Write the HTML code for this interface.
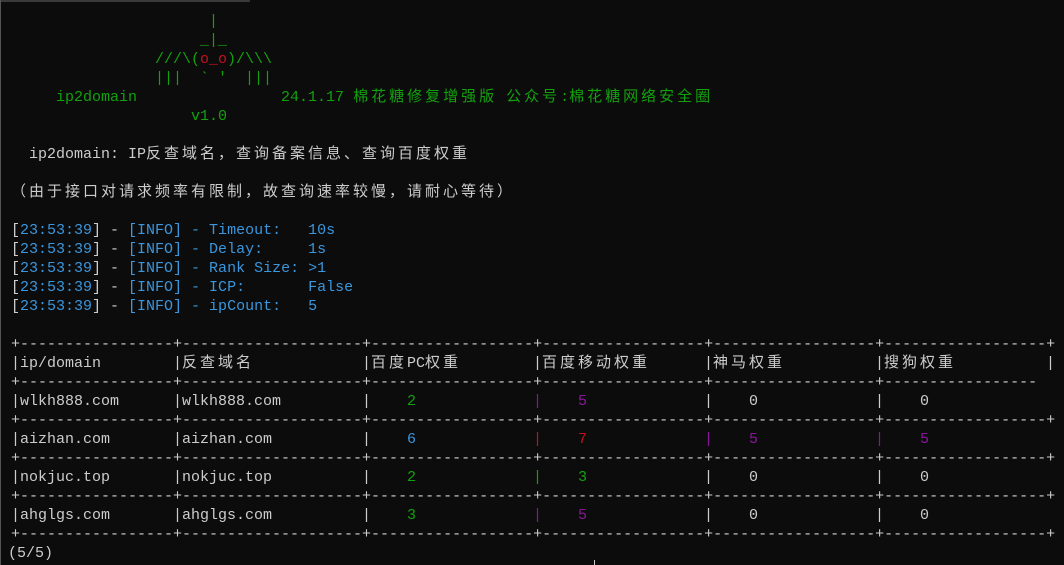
<!DOCTYPE html>
<html><head><meta charset="utf-8"><style>
html,body{margin:0;padding:0}
body{width:1064px;height:565px;background:#0c0c0c;overflow:hidden;position:relative;font-family:"Liberation Mono","Noto Sans CJK SC",monospace;font-size:15px;color:#cccccc}
.l{position:absolute;height:19px;line-height:19px;white-space:pre}
.c{letter-spacing:3px}
.g{color:#13a10e}.r{color:#c50f1f}.b{color:#3a96dd}.p{color:#881798}.w{color:#cccccc}
.s{position:absolute;top:0;white-space:pre}
</style></head><body>
<div style="position:absolute;left:0;top:0;width:250px;height:2px;background:#3a3a3a"></div>
<div style="position:absolute;left:0;top:0;width:1px;height:565px;background:#555"></div>

<div class="l g" style="top:12px;left:11px">                      |</div>
<div class="l g" style="top:31px;left:11px">                     _|_</div>
<div class="l g" style="top:50px;left:11px">                ///\(<span class="r">o_o</span>)/\\\</div>
<div class="l g" style="top:69px;left:11px">                |||  ` '  |||</div>
<div class="l g" style="top:88px;left:11px">     ip2domain                24.1.17 <span class="c">棉花糖修复增强版</span> <span class="c">公众号</span>:<span class="c">棉花糖网络安全圈</span></div>
<div class="l g" style="top:107px;left:11px">                    v1.0</div>
<div class="l" style="top:145px;left:11px">  ip2domain: IP<span class="c">反查域名，查询备案信息、查询百度权重</span></div>
<div class="l" style="top:183px;left:11px"><span class="c">（由于接口对请求频率有限制，故查询速率较慢，请耐心等待）</span></div>

<div class="l b" style="top:221px;left:11px"><span class="w">[</span>23:53:39<span class="w">] - </span>[INFO] - Timeout:   10s</div>
<div class="l b" style="top:240px;left:11px"><span class="w">[</span>23:53:39<span class="w">] - </span>[INFO] - Delay:     1s</div>
<div class="l b" style="top:259px;left:11px"><span class="w">[</span>23:53:39<span class="w">] - </span>[INFO] - Rank Size: &gt;1</div>
<div class="l b" style="top:278px;left:11px"><span class="w">[</span>23:53:39<span class="w">] - </span>[INFO] - ICP:       False</div>
<div class="l b" style="top:297px;left:11px"><span class="w">[</span>23:53:39<span class="w">] - </span>[INFO] - ipCount:   5</div>

<div class="l" style="top:335px;left:11px">+-----------------+--------------------+------------------+------------------+------------------+------------------+</div>
<div class="l" style="top:354px;left:0;width:1064px"><span class="s" style="left:11px">|ip/domain</span><span class="s" style="left:173px">|<span class="c">反查域名</span></span><span class="s" style="left:362px">|<span class="c">百度</span>PC<span class="c">权重</span></span><span class="s" style="left:533px">|<span class="c">百度移动权重</span></span><span class="s" style="left:704px">|<span class="c">神马权重</span></span><span class="s" style="left:875px">|<span class="c">搜狗权重</span></span><span class="s" style="left:1046px">|</span></div>
<div class="l" style="top:373px;left:11px">+-----------------+--------------------+------------------+------------------+------------------+-----------------</div>

<div class="l" style="top:392px;left:0;width:1064px"><span class="s" style="left:11px">|wlkh888.com</span><span class="s" style="left:173px">|wlkh888.com</span><span class="s" style="left:362px">|</span><span class="s g" style="left:407px">2</span><span class="s p" style="left:533px">|</span><span class="s p" style="left:578px">5</span><span class="s" style="left:704px">|</span><span class="s" style="left:749px">0</span><span class="s" style="left:875px">|</span><span class="s" style="left:920px">0</span></div>
<div class="l" style="top:411px;left:11px">+-----------------+--------------------+------------------+------------------+------------------+------------------+</div>

<div class="l" style="top:430px;left:0;width:1064px"><span class="s" style="left:11px">|aizhan.com</span><span class="s" style="left:173px">|aizhan.com</span><span class="s" style="left:362px">|</span><span class="s b" style="left:407px">6</span><span class="s r" style="left:533px">|</span><span class="s r" style="left:578px">7</span><span class="s p" style="left:704px">|</span><span class="s p" style="left:749px">5</span><span class="s p" style="left:875px">|</span><span class="s p" style="left:920px">5</span></div>
<div class="l" style="top:449px;left:11px">+-----------------+--------------------+------------------+------------------+------------------+------------------+</div>

<div class="l" style="top:468px;left:0;width:1064px"><span class="s" style="left:11px">|nokjuc.top</span><span class="s" style="left:173px">|nokjuc.top</span><span class="s" style="left:362px">|</span><span class="s g" style="left:407px">2</span><span class="s g" style="left:533px">|</span><span class="s g" style="left:578px">3</span><span class="s" style="left:704px">|</span><span class="s" style="left:749px">0</span><span class="s" style="left:875px">|</span><span class="s" style="left:920px">0</span></div>
<div class="l" style="top:487px;left:11px">+-----------------+--------------------+------------------+------------------+------------------+------------------+</div>

<div class="l" style="top:506px;left:0;width:1064px"><span class="s" style="left:11px">|ahglgs.com</span><span class="s" style="left:173px">|ahglgs.com</span><span class="s" style="left:362px">|</span><span class="s g" style="left:407px">3</span><span class="s p" style="left:533px">|</span><span class="s p" style="left:578px">5</span><span class="s" style="left:704px">|</span><span class="s" style="left:749px">0</span><span class="s" style="left:875px">|</span><span class="s" style="left:920px">0</span></div>
<div class="l" style="top:525px;left:11px">+-----------------+--------------------+------------------+------------------+------------------+------------------+</div>
<div class="l" style="top:544px;left:8px">(5/5)</div>
<div style="position:absolute;left:594px;top:560px;width:1px;height:5px;background:#ccc"></div>
</body></html>
